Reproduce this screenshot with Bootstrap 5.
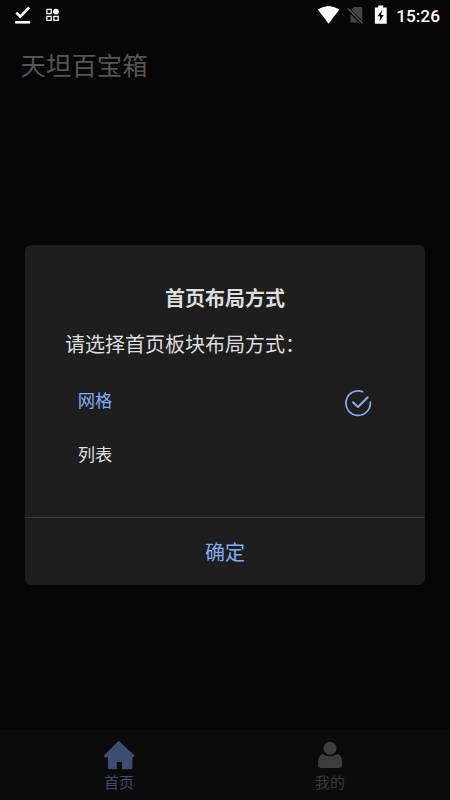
<!DOCTYPE html>
<html lang="zh-CN">
<head>
<meta charset="utf-8">
<meta name="viewport" content="width=device-width, initial-scale=1">
<title>天坦百宝箱</title>
<link href="https://cdn.jsdelivr.net/npm/bootstrap@5.3.0/dist/css/bootstrap.min.css" rel="stylesheet">
<style>
body{background:#060606;font-family:"Noto Sans CJK SC",sans-serif;color:#dedede;overflow:hidden}
.screen{width:450px;height:800px}
.statusbar{height:30px;padding:0 10px 0 14px;color:#fff}
.clock{font:500 17.3px/30px Roboto,sans-serif;padding-top:1px}
.app-title{font-size:25.4px;line-height:36px;color:#555;padding:16px 20px 2px 20.6px}
.dialog-box{width:400px;height:340.5px;margin-top:160.5px;background:#1e1e1e;border-radius:6px}
.dialog-body{height:272.5px;padding:38.5px 40px 0}
.dialog-title{font-size:20px;line-height:30px;font-weight:700}
.dialog-text{font-size:20px;line-height:30px;margin:16px 0 14px}
.option{height:54px;padding:0 13.500px 0 12.700px;font-size:17.3px}
.option span{line-height:26px}
.option svg{margin-top:5px}
.accent{color:#82acf5}
.confirm{height:68px;border:0;border-top:1px solid #373737;background:none;font-size:20px}
.tabs{height:70px;background:#0b0b0b;font-size:15px;line-height:20px;padding:0 14.500px 0 13.500px}
.tab-home{color:#3c4f70}
.tab-me{color:#3c3c3c}
</style>
<script src="https://cdn.jsdelivr.net/npm/bootstrap@5.3.0/dist/js/bootstrap.bundle.min.js"></script>
</head>
<body>
<div class="screen d-flex flex-column">
  <div class="statusbar d-flex align-items-center justify-content-between flex-shrink-0">
    <div class="d-flex align-items-center">
      <svg width="48" height="30" viewBox="14 0 48 30" fill="none" stroke="#fff">
        <path d="M16.300 12.700l4 4L29.200 7.500" stroke-width="2.600"/>
        <path d="M15 22.300h15.200" stroke-width="2.600"/>
        <path d="M46.900 9.400h4.300v4.300h-4.300zM46.900 16.300h4.300v4.100h-4.300zM53.900 16.300h4.300v4.100h-4.300z" stroke-width="1.300"/>
        <circle cx="56" cy="11.600" r="2.900" fill="#fff" stroke="none"/>
      </svg>
    </div>
    <div class="d-flex align-items-center">
      <svg width="79" height="30" viewBox="317 0 79 30">
        <path d="M317.800 9.500Q328.500 2.500 339.400 9.500L328.600 23.700z" fill="#fff"/>
        <path d="M350.500 10.500L354 7h7q1.300 0 1.300 1.300v14.300H350.500z" fill="#454545"/>
        <path d="M347.500 8.700l15.400 15" stroke="#060606" stroke-width="3.500"/>
        <path d="M347.800 8.300l14.700 15" stroke="#555" stroke-width="1.500"/>
        <path d="M378.200 5.500h5v2h3.500v16.200h-11.800V7.500h3.300z" fill="#fff"/>
        <path d="M382 10.200l-4.500 6h2.700l-.7 5 4.200-6.300h-2.500z" fill="#060606"/>
      </svg>
      <span class="clock">15:26</span>
    </div>
  </div>
  <header class="app-title flex-shrink-0">天坦百宝箱</header>
  <main class="dialog-box mx-auto flex-shrink-0" role="dialog">
    <div class="dialog-body">
      <div class="dialog-title text-center">首页布局方式</div>
      <div class="dialog-text text-nowrap">请选择首页板块布局方式：</div>
      <div class="option accent d-flex align-items-center justify-content-between">
        <span>网格</span>
        <svg width="28" height="28" viewBox="0 0 28 28" fill="none" stroke="currentColor" stroke-width="1.700" stroke-linecap="round" stroke-linejoin="round">
          <path d="M18.600 2.800A12.200 12.200 0 1 0 26.300 13.200"/>
          <path d="M9 13.300l5 4.600 9.700-9.600" stroke-width="2.100"/>
        </svg>
      </div>
      <div class="option d-flex align-items-center"><span>列表</span></div>
    </div>
    <button class="confirm accent w-100 d-block" type="button">确定</button>
  </main>
  <nav class="tabs row g-0 mt-auto text-center flex-shrink-0">
    <div class="tab-home col-6 d-flex flex-column align-items-center">
      <svg width="32" height="42" viewBox="103 730 32 42" fill="currentColor">
        <path d="M119.200 741.300l15 13.700q.6 2.200-1.800 2.300V768q0 1.200-1.200 1.200H122v-7.300h-5.200v7.300H109.300q-1.300 0-1.300-1.200v-10.700h-2.600q-1.800-.3-1-2.300l13.500-13.400q.7-.6 1.300-.3z"/>
      </svg>
      <span>首页</span>
    </div>
    <div class="tab-me col-6 d-flex flex-column align-items-center">
      <svg width="30" height="42" viewBox="315 730 30 42" fill="currentColor">
        <circle cx="330" cy="748.300" r="6.500"/>
        <path d="M322.500 754q7.500 4.500 15 0 4.500 1.500 4.500 8v3q0 3-3.200 3h-17.600q-3.200 0-3.200-3v-3q0-6.500 4.500-8z"/>
      </svg>
      <span>我的</span>
    </div>
  </nav>
</div>
</body>
</html>
